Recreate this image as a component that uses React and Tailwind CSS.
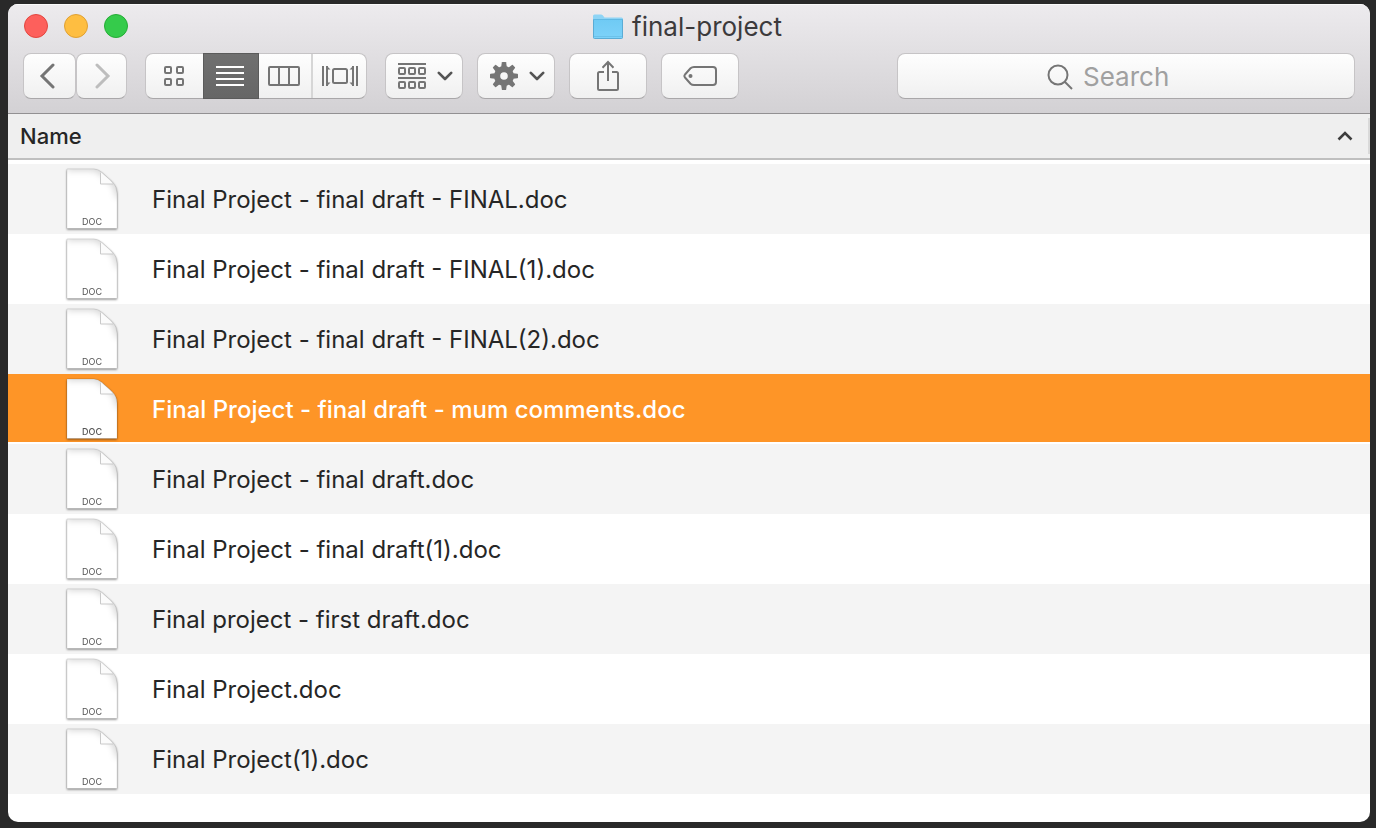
const FILES = [
  "Final Project - final draft - FINAL.doc",
  "Final Project - final draft - FINAL(1).doc",
  "Final Project - final draft - FINAL(2).doc",
  "Final Project - final draft - mum comments.doc",
  "Final Project - final draft.doc",
  "Final Project - final draft(1).doc",
  "Final project - first draft.doc",
  "Final Project.doc",
  "Final Project(1).doc",
];
const SELECTED = 3;

const SURFACE =
  "border border-[#c6c4c6] border-b-[#a9a7a9] bg-linear-to-b from-[#fefefe] to-[#f0f0f0]";

function ToolButton({ label, className = "", children }) {
  return (
    <button
      type="button"
      aria-label={label}
      className={`flex h-[46px] shrink-0 items-center justify-center rounded-lg ${SURFACE} ${className}`}
    >
      {children}
    </button>
  );
}

function Chevron() {
  return (
    <svg width="16" height="10" viewBox="0 0 16 10" fill="none" stroke="#555" strokeWidth="2.6" strokeLinecap="round" strokeLinejoin="round">
      <path d="M1.8 1.8 8 8l6.2-6.200" />
    </svg>
  );
}

function FolderIcon() {
  return (
    <svg width="32" height="26" viewBox="0 0 32 26">
      <defs>
        <linearGradient id="folder" x1="0" y1="0" x2="0" y2="1">
          <stop offset="0" stopColor="#6fcaf4" />
          <stop offset="1" stopColor="#7dd2f9" />
        </linearGradient>
      </defs>
      <path d="M1 2Q1 .5 2.500 .5H9Q10 .5 10.700 1.200L12.500 3.500H29.500Q31 3.500 31 5V24H1Z" fill="#8ed4f5" />
      <path d="M1 5.500H31V23Q31 24.500 29.500 24.500H2.500Q1 24.500 1 23Z" fill="url(#folder)" />
      <path d="M1 5.500H31" stroke="#62b9e3" />
      <path d="M1.500 22.500H30.500" stroke="#6cc2ea" />
      <path d="M1.500 6V23.500Q1.500 24.500 2.500 24.500H29.500Q30.500 24.500 30.500 23.500V6" fill="none" stroke="#5bacd5" />
    </svg>
  );
}

function GearIcon() {
  return (
    <svg width="28" height="28" viewBox="-14 -14 28 28" fill="#757575">
      <path
        fillRule="evenodd"
        d="M0-10A10 10 0 1 1 0 10A10 10 0 1 1 0-10ZM0-3.800A3.800 3.800 0 1 0 0 3.800A3.800 3.800 0 1 0 0-3.800Z"
      />
      {[0, 45, 90, 135, 180, 225, 270, 315].map((angle) => (
        <path key={angle} transform={`rotate(${angle})`} d="M-2.800-9 -2.200-13.400Q-2-14-1.500-14H1.500Q2-14 2.200-13.400L2.800-9Z" />
      ))}
    </svg>
  );
}

const PAGE = "M4 2H31Q35 2 39 5.500L49 14.500Q54 19.500 54 26V61.500H4Z";

function DocIcon() {
  return (
    <svg width="58" height="66" viewBox="0 0 58 66" className="block drop-shadow-[0_1px_1px_rgba(0,0,0,0.5)]">
      <defs>
        <clipPath id="page">
          <path d={PAGE} />
        </clipPath>
        <filter id="soft" x="-20%" y="-40%" width="140%" height="180%">
          <feGaussianBlur stdDeviation="3.5" />
        </filter>
      </defs>
      <path d={PAGE} fill="#fff" />
      <g clipPath="url(#page)">
        <path d="M4 0H31Q36 1 40 5L51 15Q56 20 56 30" fill="none" stroke="#000" strokeOpacity=".2" strokeWidth="6" filter="url(#soft)" />
      </g>
      <path d="M37.500 5V17H50Q48 14.500 46 12.500Z" fill="#fbfbfb" />
      <path d="M37.500 5.500V17H50" fill="none" stroke="#c9c9c9" />
      <path d={PAGE} fill="none" stroke="#000" strokeOpacity=".15" strokeWidth=".6" />
      <text x="29" y="58" textAnchor="middle" fontSize="9" fill="#555" className="font-[Inter,sans-serif]">
        DOC
      </text>
    </svg>
  );
}

export default function App() {
  return (
    <main className="flex min-h-screen bg-[#292929] pt-1 pr-[6px] pb-[6px] pl-2 font-[Inter,'Liberation_Sans',sans-serif]">
      <section className="flex min-w-0 flex-1 flex-col overflow-hidden rounded-[10px] bg-white">
        <header className="border-b border-[#929092] bg-linear-to-b from-[#edebee] to-[#d3d1d4] pb-[14px] shadow-[inset_0_1px_0_#fafafa]">
          <div className="grid h-[49px] grid-cols-[1fr_auto_1fr] items-center pr-5 pb-1 pl-4">
            <div className="flex gap-4 pb-[2px]">
              <button type="button" aria-label="Close" className="size-6 rounded-full border border-[#e2463f] bg-[#fd605c]" />
              <button type="button" aria-label="Minimize" className="size-6 rounded-full border border-[#dfa033] bg-[#febe41]" />
              <button type="button" aria-label="Zoom" className="size-6 rounded-full border border-[#25ac35] bg-[#35cb4b]" />
            </div>
            <h1 className="flex items-center gap-2 text-[26px] leading-8 text-[#3c3a3c]">
              <FolderIcon />
              final-project
            </h1>
          </div>

          <div className="flex px-[15px]">
            <ToolButton label="Back" className="w-[53px] pr-[6px]">
              <svg width="16" height="26" viewBox="0 0 16 26" fill="none" stroke="#757575" strokeWidth="3" strokeLinecap="round">
                <path d="M14 2 3 13l11 11" />
              </svg>
            </ToolButton>
            <ToolButton label="Forward" className="w-[51px] pl-[2px]">
              <svg width="16" height="26" viewBox="0 0 16 26" fill="none" stroke="#bdbdbd" strokeWidth="3" strokeLinecap="round">
                <path d="M2 2l11 11L2 24" />
              </svg>
            </ToolButton>

            <div className={`ml-[18px] flex h-[46px] shrink-0 rounded-lg ${SURFACE}`}>
              <button type="button" aria-label="Icon view" className="flex w-[57px] items-center justify-center pr-[2px]">
                <svg width="22" height="22" viewBox="0 0 22 22" fill="none" stroke="#757575" strokeWidth="2">
                  <rect x="2" y="2" width="6" height="6" rx="1" />
                  <rect x="14" y="2" width="6" height="6" rx="1" />
                  <rect x="2" y="14" width="6" height="6" rx="1" />
                  <rect x="14" y="14" width="6" height="6" rx="1" />
                </svg>
              </button>
              <button
                type="button"
                aria-label="List view"
                aria-pressed="true"
                className="-my-px flex w-14 items-center justify-center border border-[#5b5b5b] bg-linear-to-b from-[#707070] to-[#666] pr-[2px]"
              >
                <svg width="28" height="20" viewBox="0 0 28 20" stroke="#fff" strokeWidth="2">
                  <path d="M0 1h28M0 7h28M0 13h28M0 19h28" />
                </svg>
              </button>
              <button type="button" aria-label="Column view" className="flex w-[52px] items-center justify-center pr-[2px]">
                <svg width="32" height="20" viewBox="0 0 32 20" fill="none" stroke="#757575" strokeWidth="2">
                  <rect x="1" y="1" width="30" height="18" rx="1" />
                  <path d="M11 1v18M21 1v18" />
                </svg>
              </button>
              <button type="button" aria-label="Cover flow view" className="flex w-[55px] items-center justify-center border-l-2 border-[#d6d6d6]">
                <svg width="36" height="20" viewBox="0 0 36 20" fill="none" stroke="#757575" strokeWidth="2">
                  <path d="M1 0v20M35 0v20" />
                  <path d="M5 0v20M31 0v20" strokeWidth="2" />
                  <path d="M5 0 8.500 3.500H5ZM5 20 8.500 16.500H5ZM31 0 27.500 3.500H31ZM31 20 27.500 16.500H31Z" fill="#757575" stroke="none" />
                  <rect x="11" y="3" width="14" height="14" rx="1.500" />
                </svg>
              </button>
            </div>

            <ToolButton label="Arrange items" className="ml-[18px] w-[78px] gap-[11px] pl-[2px]">
              <svg width="28" height="26" viewBox="0 0 28 26" fill="none" stroke="#757575" strokeWidth="2">
                <path d="M0 1h28M0 15h28" />
                <rect x="1" y="5" width="6" height="6" rx="1" />
                <rect x="11" y="5" width="6" height="6" rx="1" />
                <rect x="21" y="5" width="6" height="6" rx="1" />
                <rect x="1" y="19" width="6" height="6" rx="1" />
                <rect x="11" y="19" width="6" height="6" rx="1" />
                <rect x="21" y="19" width="6" height="6" rx="1" />
              </svg>
              <Chevron />
            </ToolButton>
            <ToolButton label="Actions" className="ml-[14px] w-[78px] gap-[11px] pl-[2px]">
              <GearIcon />
              <Chevron />
            </ToolButton>
            <ToolButton label="Share" className="ml-[14px] w-[78px]">
              <svg width="22" height="32" viewBox="0 0 22 32" fill="none" stroke="#757575" strokeWidth="2">
                <path d="M7 12H2.500Q1 12 1 13.500V28.500Q1 30 2.500 30H19.500Q21 30 21 28.500V13.500Q21 12 19.500 12H15" />
                <path d="M11 21V2M5.500 7.700 11 2l5.500 5.700" />
              </svg>
            </ToolButton>
            <ToolButton label="Edit tags" className="ml-[14px] w-[78px]">
              <svg width="34" height="20" viewBox="0 0 34 20" fill="none" stroke="#757575" strokeWidth="2">
                <path d="M11 1H30Q33 1 33 4V16Q33 19 30 19H11Q9 19 7.500 17.700L2 11.500Q.8 10 2 8.500L7.500 2.300Q9 1 11 1Z" />
                <circle cx="7.500" cy="10" r="2" fill="#757575" stroke="none" />
              </svg>
            </ToolButton>

            <label className={`ml-auto flex h-[46px] w-[458px] min-w-0 items-center justify-center gap-[10px] rounded-lg pt-[2px] ${SURFACE}`}>
              <svg width="26" height="26" viewBox="0 0 26 26" fill="none" stroke="#757575" strokeWidth="2">
                <circle cx="11" cy="11" r="9.500" />
                <path d="M17.500 17.500 25 25" />
              </svg>
              <input
                type="text"
                aria-label="Search"
                placeholder="Search"
                className="w-[122px] bg-transparent text-[26px] leading-8 text-[#3c3a3c] outline-none placeholder:text-[#a0a0a0]"
              />
            </label>
          </div>
        </header>

        <table className="w-full border-collapse text-left">
          <thead>
            <tr>
              <th scope="col" className="p-0 pb-1 font-medium">
                <div className="flex h-[46px] items-center justify-between border-b-2 border-[#bfbfbf] bg-[#efefef] pl-3">
                  <span className="text-[22px] leading-7 text-[#262626]">Name</span>
                  <span className="flex h-9 items-center border-r-2 border-[#d9d9d9] pr-[15px]">
                    <svg width="16" height="10" viewBox="0 0 16 10" fill="none" stroke="#3e3e3e" strokeWidth="2.600">
                      <path d="M1.500 8.500 8 2l6.500 6.500" />
                    </svg>
                  </span>
                </div>
              </th>
            </tr>
          </thead>
          <tbody>
            {FILES.map((name, i) => (
              <tr key={name} aria-selected={i === SELECTED}>
                <td className={`h-[70px] p-0 ${i === SELECTED ? "pb-[2px]" : i % 2 === 0 ? "bg-[#f4f4f4]" : ""}`}>
                  <div
                    className={`flex gap-[31px] pl-[55px] ${
                      i === SELECTED ? "h-[68px] bg-[#fe9527] font-medium text-white" : "h-[70px] text-[#262626]"
                    }`}
                  >
                    <span className="pt-[3px]">
                      <DocIcon />
                    </span>
                    <span className="pt-5 text-[24px] leading-8">{name}</span>
                  </div>
                </td>
              </tr>
            ))}
          </tbody>
        </table>
      </section>
    </main>
  );
}
